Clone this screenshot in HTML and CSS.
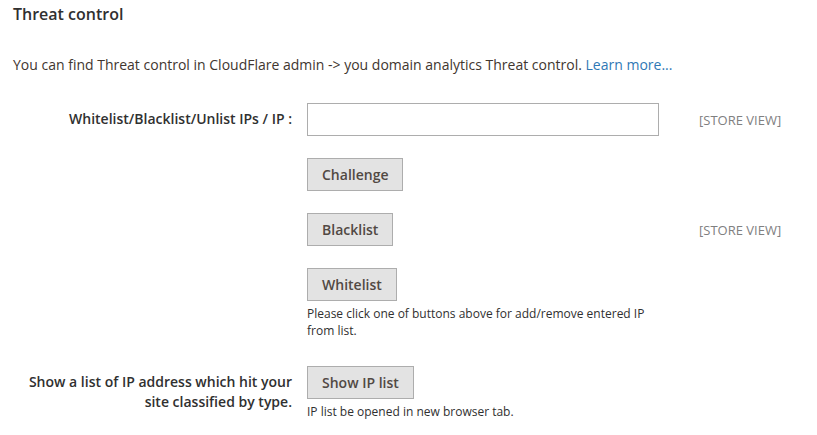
FILE: index.html
```html
<!DOCTYPE html>
<html lang="en">
<head>
  <meta charset="UTF-8">
  <title>Threat control</title>
  <link rel="stylesheet" href="styles.css">
</head>
<body>
  <div class="section">
    <h2 class="section-title">Threat control</h2>
    <p class="intro">You can find Threat control in CloudFlare admin -&gt; you domain analytics Threat control. <a href="#">Learn more...</a></p>

    <div class="field">
      <label class="label">Whitelist/Blacklist/Unlist IPs / IP :</label>
      <div class="control">
        <input type="text" class="input-text">
      </div>
      <div class="scope">[STORE VIEW]</div>
    </div>

    <div class="field">
      <div class="label"></div>
      <div class="control">
        <button class="btn">Challenge</button>
      </div>
    </div>

    <div class="field">
      <div class="label"></div>
      <div class="control">
        <button class="btn">Blacklist</button>
      </div>
      <div class="scope">[STORE VIEW]</div>
    </div>

    <div class="field">
      <div class="label"></div>
      <div class="control">
        <button class="btn">Whitelist</button>
        <p class="note">Please click one of buttons above for add/remove entered IP from list.</p>
      </div>
    </div>

    <div class="field field-last">
      <label class="label">Show a list of IP address which hit your site classified by type.</label>
      <div class="control">
        <button class="btn">Show IP list</button>
        <p class="note">IP list be opened in new browser tab.</p>
      </div>
    </div>
  </div>
</body>
</html>
```

FILE: styles.css
```css
* {
  box-sizing: border-box;
  margin: 0;
  padding: 0;
}

body {
  font-family: 'Open Sans', 'Liberation Sans', sans-serif;
  background: #fff;
  color: #303030;
  font-size: 14px;
}

.section {
  padding: 5px 13px 0;
}

.section-title {
  font-size: 16px;
  font-weight: 600;
  line-height: 19px;
  color: #303030;
}

.intro {
  margin-top: 31px;
  line-height: 20px;
  color: #41362f;
}

.intro a {
  color: #2f78b5;
  text-decoration: none;
}

.field {
  display: flex;
  align-items: flex-start;
  margin-top: 28px;
}

.field + .field {
  margin-top: 22px;
}

.field-last.field {
  margin-top: 27px;
}

.label {
  width: 279px;
  margin-right: 15px;
  padding-top: 6px;
  text-align: right;
  font-weight: 600;
  line-height: 20px;
  color: #303030;
}

.control {
  width: 352px;
}

.input-text {
  display: block;
  width: 352px;
  height: 33px;
  border: 1px solid #adadad;
  background: #fff;
  outline: none;
}

.btn {
  height: 33px;
  padding: 0 14px;
  background: #e3e3e3;
  border: 1px solid #adadad;
  color: #514943;
  font-family: inherit;
  font-size: 14px;
  font-weight: 600;
}

.note {
  margin-top: 4px;
  font-size: 12px;
  line-height: 17px;
  color: #303030;
  padding-right: 10px;
}

.scope {
  margin-left: 40px;
  height: 33px;
  display: flex;
  align-items: center;
  font-size: 13px;
  color: #808080;
}
```
